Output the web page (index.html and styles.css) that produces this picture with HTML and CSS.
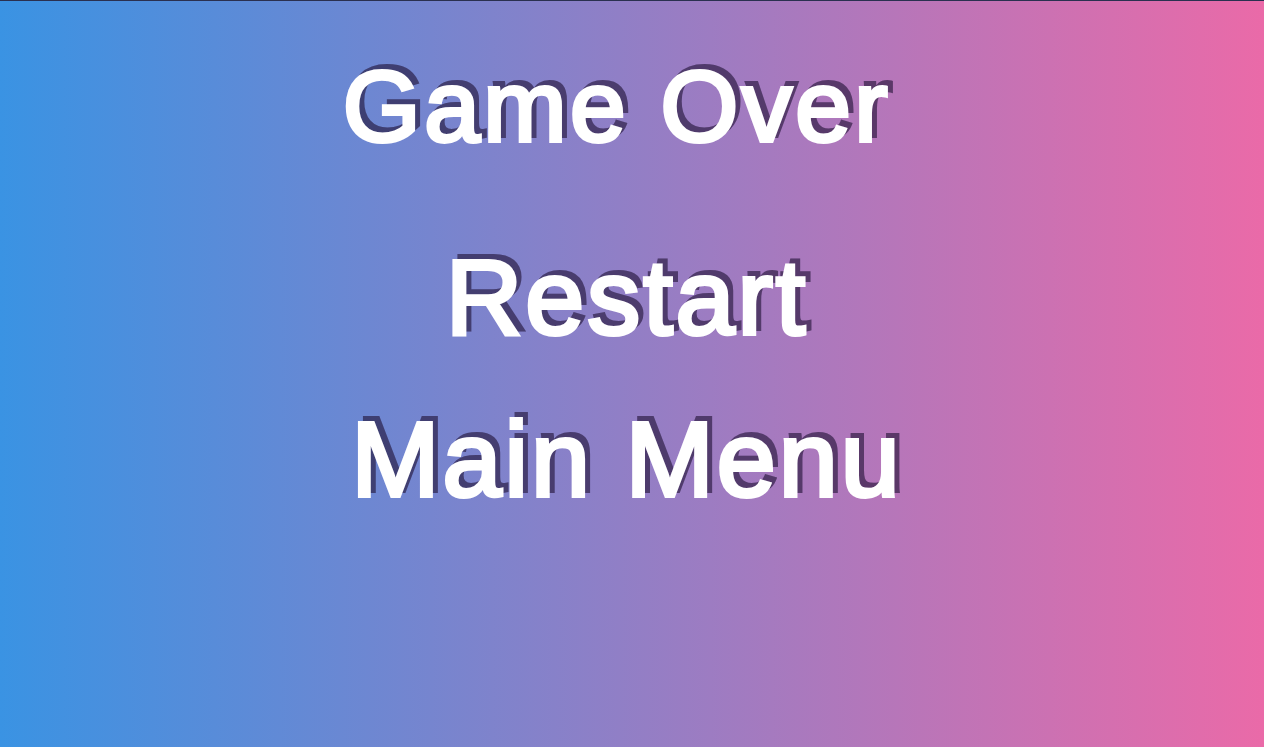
FILE: index.html
```html
<!DOCTYPE html>
<html lang="en">
<head>
<meta charset="utf-8">
<title>Game Over</title>
<link rel="stylesheet" href="styles.css">
</head>
<body>
<main class="screen">
  <h1 class="title">Game Over</h1>
  <nav class="menu">
    <button class="menu-item" type="button">Restart</button>
    <button class="menu-item" type="button">Main Menu</button>
  </nav>
</main>
</body>
</html>
```
FILE: styles.css
```css
html, body {
  margin: 0;
  height: 100%;
}

body {
  background: linear-gradient(to right, #3a93e3, #ea6aa8);
  border-top: 1px solid #2a3050;
  box-sizing: border-box;
  font-family: "Liberation Sans", Arial, sans-serif;
  overflow: hidden;
}

.screen {
  display: flex;
  flex-direction: column;
  align-items: center;
  padding-top: 55px;
  padding-right: 10px;
}

.title,
.menu-item {
  color: #fff;
  font-weight: normal;
  line-height: 1;
  letter-spacing: 3px;
  -webkit-text-stroke: 4px #fff;
  filter: drop-shadow(5px -5px 0.5px rgba(30, 15, 50, 0.6));
}

.title {
  margin: 0 20px 0 0;
  font-size: 100px;
  letter-spacing: 3.5px;
}

.menu {
  display: flex;
  flex-direction: column;
  align-items: center;
  gap: 56px;
  margin-top: 88px;
}

.menu-item {
  background: none;
  border: 0;
  padding: 0;
  font-family: inherit;
  font-size: 106px;
  cursor: pointer;
}
```
